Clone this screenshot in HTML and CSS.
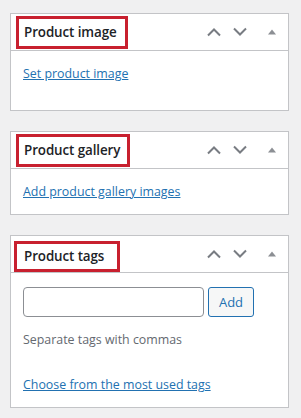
FILE: index.html
```html
<!DOCTYPE html>
<html lang="en">
<head>
    <meta charset="UTF-8">
    <meta name="viewport" content="width=device-width, initial-scale=1.0">
    <title>Product boxes</title>
    <link rel="stylesheet" href="styles.css">
</head>
<body>
    <div class="postbox">
        <div class="postbox-header">
            <h2 class="hndle hndle-image">Product image</h2>
            <div class="handle-actions">
                <button class="handle-btn" aria-label="Move up">
                    <svg width="16" height="10" viewBox="0 0 16 10"><path d="M2 8.5 L8 2.5 L14 8.5" fill="none" stroke="currentColor" stroke-width="2"/></svg>
                </button>
                <button class="handle-btn" aria-label="Move down">
                    <svg width="16" height="10" viewBox="0 0 16 10"><path d="M2 1.5 L8 7.5 L14 1.5" fill="none" stroke="currentColor" stroke-width="2"/></svg>
                </button>
                <button class="handle-btn toggle" aria-label="Toggle panel">
                    <svg width="10" height="8" viewBox="0 0 10 8"><path d="M5 1.5 L9 6.5 L1 6.5 Z" fill="currentColor"/></svg>
                </button>
            </div>
        </div>
        <div class="inside inside-image">
            <a href="#">Set product image</a>
        </div>
    </div>

    <div class="postbox">
        <div class="postbox-header">
            <h2 class="hndle hndle-gallery">Product gallery</h2>
            <div class="handle-actions">
                <button class="handle-btn" aria-label="Move up">
                    <svg width="16" height="10" viewBox="0 0 16 10"><path d="M2 8.5 L8 2.5 L14 8.5" fill="none" stroke="currentColor" stroke-width="2"/></svg>
                </button>
                <button class="handle-btn" aria-label="Move down">
                    <svg width="16" height="10" viewBox="0 0 16 10"><path d="M2 1.5 L8 7.5 L14 1.5" fill="none" stroke="currentColor" stroke-width="2"/></svg>
                </button>
                <button class="handle-btn toggle" aria-label="Toggle panel">
                    <svg width="10" height="8" viewBox="0 0 10 8"><path d="M5 1.5 L9 6.5 L1 6.5 Z" fill="currentColor"/></svg>
                </button>
            </div>
        </div>
        <div class="inside">
            <a href="#">Add product gallery images</a>
        </div>
    </div>

    <div class="postbox">
        <div class="postbox-header">
            <h2 class="hndle hndle-tags">Product tags</h2>
            <div class="handle-actions">
                <button class="handle-btn" aria-label="Move up">
                    <svg width="16" height="10" viewBox="0 0 16 10"><path d="M2 8.5 L8 2.5 L14 8.5" fill="none" stroke="currentColor" stroke-width="2"/></svg>
                </button>
                <button class="handle-btn" aria-label="Move down">
                    <svg width="16" height="10" viewBox="0 0 16 10"><path d="M2 1.5 L8 7.5 L14 1.5" fill="none" stroke="currentColor" stroke-width="2"/></svg>
                </button>
                <button class="handle-btn toggle" aria-label="Toggle panel">
                    <svg width="10" height="8" viewBox="0 0 10 8"><path d="M5 1.5 L9 6.5 L1 6.5 Z" fill="currentColor"/></svg>
                </button>
            </div>
        </div>
        <div class="inside">
            <div class="tag-add">
                <input type="text" class="newtag">
                <button class="button">Add</button>
            </div>
            <p class="howto">Separate tags with commas</p>
            <a href="#" class="tagcloud-link">Choose from the most used tags</a>
        </div>
    </div>
</body>
</html>
```

FILE: styles.css
```css
* {
    margin: 0;
    padding: 0;
    box-sizing: border-box;
}

body {
    background: #f0f0f1;
    padding: 13px 12px 0 10px;
    font-family: 'Open Sans', 'Noto Sans', sans-serif;
    font-size: 12.4px;
    line-height: 18px;
    color: #50575e;
}

.postbox {
    background: #fff;
    border: 1px solid #c3c4c7;
    margin-bottom: 20px;
}

.postbox-header {
    display: flex;
    align-items: center;
    justify-content: space-between;
    height: 37px;
    border-bottom: 1px solid #c3c4c7;
}

.hndle {
    margin-left: 5px;
    padding: 4px 8px 4px 5px;
    border: 3px solid #c8202f;
    font-size: 13.4px;
    font-weight: 600;
    letter-spacing: -0.1px;
    line-height: 19px;
    color: #1d2327;
}

.hndle-gallery {
    padding-right: 7px;
}

.hndle-tags {
    margin-left: 3px;
    margin-top: 5px;
    padding: 3px 13px 3px 7px;
}

.handle-actions {
    display: flex;
    align-items: center;
    margin-right: 3px;
}

.handle-btn {
    display: flex;
    align-items: center;
    justify-content: center;
    width: 26px;
    height: 36px;
    border: none;
    background: none;
    color: #787c82;
}

.handle-btn.toggle {
    margin-left: 6px;
    color: #8c8f94;
}

.inside {
    padding: 14px 12px 13px;
}

.inside-image {
    padding-bottom: 27px;
}

a {
    color: #2271b1;
    text-decoration: underline;
}

.tag-add {
    display: flex;
    gap: 4px;
}

.newtag {
    width: 181px;
    height: 30px;
    border: 1px solid #8c8f94;
    border-radius: 4px;
    background: #fff;
}

.button {
    width: 46px;
    height: 30px;
    border: 1px solid #2271b1;
    border-radius: 3px;
    background: #f6f7f7;
    color: #2271b1;
    font-family: inherit;
    font-size: 13px;
}

.howto {
    margin: 14px 0 27px;
    color: #646970;
}
```
